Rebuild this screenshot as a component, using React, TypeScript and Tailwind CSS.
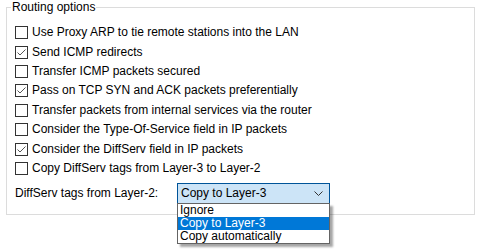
import { useState } from "react";

const options = [
  { label: "Use Proxy ARP to tie remote stations into the LAN", checked: false },
  { label: "Send ICMP redirects", checked: true },
  { label: "Transfer ICMP packets secured", checked: false },
  { label: "Pass on TCP SYN and ACK packets preferentially", checked: true },
  { label: "Transfer packets from internal services via the router", checked: false },
  { label: "Consider the Type-Of-Service field in IP packets", checked: false },
  { label: "Consider the DiffServ field in IP packets", checked: true },
  { label: "Copy DiffServ tags from Layer-3 to Layer-2", checked: false },
];

const choices = ["Ignore", "Copy to Layer-3", "Copy automatically"];

function CheckBox({ checked }: { checked: boolean }) {
  return (
    <span className="w-[13px] h-[13px] border border-[#333333] bg-white flex items-center justify-center shrink-0">
      {checked && (
        <svg width="11" height="11" viewBox="0 0 11 11">
          <path d="M1.5 5.5 L4 8 L9.5 2.5" fill="none" stroke="#555555" strokeWidth="1" />
        </svg>
      )}
    </span>
  );
}

export default function App() {
  const [selected] = useState(1);

  return (
    <div
      className="w-[480px] h-[252px] bg-white text-[12px] text-black relative overflow-hidden"
      style={{ fontFamily: '"Liberation Sans", Arial, sans-serif' }}
    >
      {/* Group box */}
      <div className="absolute left-[6px] top-[7px] w-[469px] h-[208px] border border-[#dcdcdc]" />
      <div className="absolute left-[11px] top-0 px-[1px] bg-white leading-[15px]">Routing options</div>

      <div className="relative pt-[23px] pl-[15px] flex flex-col">
        {options.map((opt) => (
          <div key={opt.label} className="flex items-center gap-[4px] h-[19.4px]">
            <CheckBox checked={opt.checked} />
            <span className="leading-[13px] whitespace-nowrap">{opt.label}</span>
          </div>
        ))}

        <div className="flex items-center mt-[5px] h-[21px]">
          <span className="w-[162px] leading-[13px]">DiffServ tags from Layer-2:</span>
          <div className="relative w-[153px] h-[21px] border border-[#005499] bg-[#cce4f7] flex items-center pl-[3px]">
            <span className="leading-[13px]">{choices[selected]}</span>
            <svg className="absolute right-[6px] top-[7px]" width="9" height="6" viewBox="0 0 9 6">
              <path d="M0.5 0.5 L4.5 4.5 L8.5 0.5" fill="none" stroke="#333333" strokeWidth="1" />
            </svg>

            {/* Open dropdown list */}
            <div className="absolute left-[-1px] top-[19px] w-[153px] border border-[#646464] bg-white shadow-[3px_3px_2px_rgba(0,0,0,0.35)]">
              {choices.map((c, i) => (
                <div
                  key={c}
                  className={
                    i === selected
                      ? "h-[13px] leading-[13px] pl-[2px] bg-[#0078d7] text-white"
                      : "h-[13px] leading-[13px] pl-[2px]"
                  }
                >
                  {c}
                </div>
              ))}
            </div>
          </div>
        </div>
      </div>
    </div>
  );
}
